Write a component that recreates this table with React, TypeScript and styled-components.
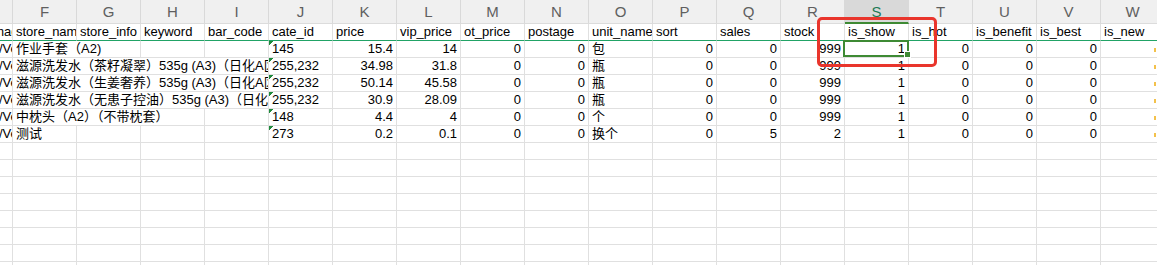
import styled, { createGlobalStyle } from "styled-components";

type Align = "left" | "right";

type CellData = {
  text?: string;
  align?: Align;
  span?: number;
  flag?: boolean;
  mark?: boolean;
  selected?: boolean;
};

const LETTERS = ["E", "F", "G", "H", "I", "J", "K", "L", "M", "N", "O", "P", "Q", "R", "S", "T", "U", "V", "W"];

const FIELDS = [
  "slider_image",
  "store_name",
  "store_info",
  "keyword",
  "bar_code",
  "cate_id",
  "price",
  "vip_price",
  "ot_price",
  "postage",
  "unit_name",
  "sort",
  "sales",
  "stock",
  "is_show",
  "is_hot",
  "is_benefit",
  "is_best",
  "is_new",
];

type Product = {
  name: string;
  span: number;
  cate: string;
  price: string;
  vip: string;
  unit: string;
  sales: string;
  stock: string;
};

const PRODUCTS: Product[] = [
  { name: "作业手套（A2)", span: 2, cate: "145", price: "15.4", vip: "14", unit: "包", sales: "0", stock: "999" },
  { name: "滋源洗发水（茶籽凝翠）535g (A3)（日化A区）", span: 4, cate: "255,232", price: "34.98", vip: "31.8", unit: "瓶", sales: "0", stock: "999" },
  { name: "滋源洗发水（生姜奢养）535g (A3)（日化A区）", span: 4, cate: "255,232", price: "50.14", vip: "45.58", unit: "瓶", sales: "0", stock: "999" },
  { name: "滋源洗发水（无患子控油）535g (A3)（日化A区）", span: 4, cate: "255,232", price: "30.9", vip: "28.09", unit: "瓶", sales: "0", stock: "999" },
  { name: "中枕头（A2）（不带枕套）", span: 3, cate: "148", price: "4.4", vip: "4", unit: "个", sales: "0", stock: "999" },
  { name: "测试", span: 1, cate: "273", price: "0.2", vip: "0.1", unit: "换个", sales: "5", stock: "2" },
];

// the name overflows into the empty columns after it, so it spans them
const toCells = (p: Product, index: number): CellData[] => {
  const cells: CellData[] = [
    { text: "http://ab/Ve_20210601.jpg" },
    { text: p.name, span: p.span },
  ];
  for (let i = 0; i < 4 - p.span; i++) cells.push({});
  cells.push(
    { text: p.cate, flag: true },
    { text: p.price, align: "right" },
    { text: p.vip, align: "right" },
    { text: "0", align: "right" },
    { text: "0", align: "right" },
    { text: p.unit },
    { text: "0", align: "right" },
    { text: p.sales, align: "right" },
    { text: p.stock, align: "right" },
    { text: "1", align: "right", selected: index === 0 },
    { text: "0", align: "right" },
    { text: "0", align: "right" },
    { text: "0", align: "right" },
    { mark: true },
  );
  return cells;
};

const EMPTY_ROWS = 8;

const GlobalStyle = createGlobalStyle`
  html, body {
    margin: 0;
    padding: 0;
    background: #ffffff;
  }
  body {
    font-family: "Liberation Sans", "Noto Sans CJK SC", sans-serif;
  }
`;

export default function App() {
  return (
    <>
      <GlobalStyle />
      <Viewport>
        <Sheet>
          <Row>
            {LETTERS.map((l) => (
              <ColumnHeader key={l} $active={l === "S"}>
                {l}
              </ColumnHeader>
            ))}
          </Row>
          <Row>
            {FIELDS.map((f) => (
              <Cell key={f} $freeze>
                {f}
              </Cell>
            ))}
          </Row>
          {PRODUCTS.map((p, r) => (
            <Row key={r}>
              {toCells(p, r).map((c, i) => (
                <Cell key={i} $align={c.align ?? "left"} $span={c.span ?? 1} $flag={c.flag} $selected={c.selected}>
                  {c.mark ? <Mark /> : c.text}
                </Cell>
              ))}
            </Row>
          ))}
          {Array.from({ length: EMPTY_ROWS }).map((_, r) => (
            <Row key={`e${r}`}>
              {LETTERS.map((l) => (
                <Cell key={l} />
              ))}
            </Row>
          ))}
        </Sheet>
        <Annotation />
      </Viewport>
    </>
  );
}

const Viewport = styled.div`
  position: relative;
  width: 1157px;
  height: 265px;
  overflow: hidden;
  background: #ffffff;
`;

// sheet is scrolled so that column E is mostly out of view
const Sheet = styled.div`
  margin-left: -51px;
  width: ${64 * 19}px;
`;

const Row = styled.div`
  display: grid;
  grid-template-columns: repeat(19, 64px);
`;

const ColumnHeader = styled.div<{ $active?: boolean }>`
  box-sizing: border-box;
  height: 24px;
  border-right: 1px solid #d9d9d9;
  border-bottom: ${(p) => (p.$active ? "2px solid #3e8a34" : "1px solid #dcdcdc")};
  background: ${(p) => (p.$active ? "#d9d9d9" : "#f0f0f0")};
  color: ${(p) => (p.$active ? "#1f7a55" : "#5f5f5f")};
  font-size: 15px;
  line-height: 23px;
  text-align: center;
`;

const Cell = styled.div<{
  $align?: Align;
  $span?: number;
  $flag?: boolean;
  $selected?: boolean;
  $freeze?: boolean;
}>`
  position: relative;
  grid-column: span ${(p) => p.$span ?? 1};
  box-sizing: border-box;
  height: 17px;
  padding: 0 3px;
  border-right: 1px solid #e0e0e0;
  border-bottom: 1px solid ${(p) => (p.$freeze ? "#21a366" : "#e0e0e0")};
  color: #000000;
  font-size: 13px;
  line-height: 16px;
  text-align: ${(p) => p.$align ?? "left"};
  white-space: nowrap;
  overflow: ${(p) => (p.$selected ? "visible" : "hidden")};
  background: ${(p) =>
    p.$flag ? "linear-gradient(135deg, #1f8a3c 0 3px, transparent 3px) top left / 8px 8px no-repeat" : "transparent"};

  ${(p) =>
    p.$selected &&
    `
    z-index: 1;
    &::after {
      content: "";
      position: absolute;
      top: -1px;
      left: -2px;
      right: -1px;
      bottom: 0;
      border: 2px solid #3e8a34;
    }
    &::before {
      content: "";
      position: absolute;
      right: -3px;
      bottom: -1px;
      width: 5px;
      height: 5px;
      background: #3e8a34;
      border: 1px solid #ffffff;
      z-index: 2;
    }
  `}
`;

const Mark = styled.span`
  display: inline-block;
  width: 2px;
  height: 4px;
  margin-left: 50px;
  background: #f3c14b;
  vertical-align: middle;
`;

const Annotation = styled.div`
  position: absolute;
  left: 817px;
  top: 17px;
  width: 120px;
  height: 50px;
  box-sizing: border-box;
  border: 3px solid #e9352c;
  border-radius: 5px;
  pointer-events: none;
`;
